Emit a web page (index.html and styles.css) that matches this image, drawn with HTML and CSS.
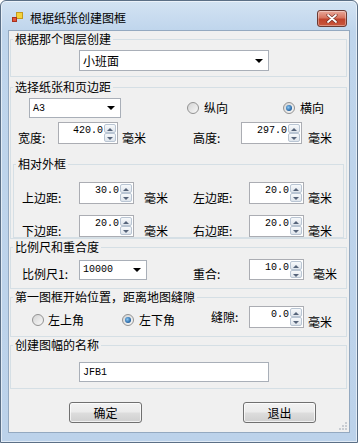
FILE: index.html
```html
<!DOCTYPE html>
<html lang="zh-CN">
<head>
    <meta charset="UTF-8">
    <title>根据纸张创建图框</title>
    <link rel="stylesheet" href="styles.css">
</head>
<body>
    <div class="window">
        <div class="titlebar">
            <svg class="app-icon" width="11" height="11" viewBox="0 0 11 11">
                <rect x="4.5" y="0.5" width="6" height="6" fill="#f3d23c" stroke="#c49a1e"/>
                <rect x="0.5" y="5.5" width="4" height="4" fill="#e2553c" stroke="#a8321e"/>
            </svg>
            <span class="title">根据纸张创建图框</span>
            <span class="close">
                <svg width="12" height="9" viewBox="0 0 12 9">
                    <path d="M2 1 L10 8 M10 1 L2 8" stroke="#6a2820" stroke-width="3" stroke-linecap="round"/>
                    <path d="M2 1 L10 8 M10 1 L2 8" stroke="#fff" stroke-width="1.8" stroke-linecap="round"/>
                </svg>
            </span>
        </div>

        <div class="client">
            <!-- source layer -->
            <fieldset class="g-layer">
                <legend>根据那个图层创建</legend>
                <div class="row">
                    <span class="combo combo-layer"><span class="txt">小班面</span><i class="caret"></i></span>
                </div>
            </fieldset>

            <!-- paper size and margins -->
            <fieldset class="g-paper">
                <legend>选择纸张和页边距</legend>
                <div class="row row-a">
                    <span class="combo combo-paper"><span class="txt latin">A3</span><i class="caret"></i></span>
                    <label class="radio radio-portrait"><span class="dot"></span>纵向</label>
                    <label class="radio radio-landscape"><span class="dot checked"></span>横向</label>
                </div>
                <div class="row row-b">
                    <span class="lbl lbl-width">宽度:</span>
                    <span class="spin spin-width"><span class="val">420.0</span><span class="arrows"><i class="up"></i><i class="dn"></i></span></span>
                    <span class="unit unit-width">毫米</span>
                    <span class="lbl lbl-height">高度:</span>
                    <span class="spin spin-height"><span class="val">297.0</span><span class="arrows"><i class="up"></i><i class="dn"></i></span></span>
                    <span class="unit unit-height">毫米</span>
                </div>

                <fieldset class="g-frame">
                    <legend>相对外框</legend>
                    <div class="row row-c">
                        <span class="lbl lbl-m1">上边距:</span>
                        <span class="spin spin-m"><span class="val">30.0</span><span class="arrows"><i class="up"></i><i class="dn"></i></span></span>
                        <span class="unit unit-m1">毫米</span>
                        <span class="lbl lbl-m2">左边距:</span>
                        <span class="spin spin-m"><span class="val">20.0</span><span class="arrows"><i class="up"></i><i class="dn"></i></span></span>
                        <span class="unit unit-m2">毫米</span>
                    </div>
                    <div class="row row-d">
                        <span class="lbl lbl-m1">下边距:</span>
                        <span class="spin spin-m"><span class="val">20.0</span><span class="arrows"><i class="up"></i><i class="dn"></i></span></span>
                        <span class="unit unit-m1">毫米</span>
                        <span class="lbl lbl-m2">右边距:</span>
                        <span class="spin spin-m"><span class="val">20.0</span><span class="arrows"><i class="up"></i><i class="dn"></i></span></span>
                        <span class="unit unit-m2">毫米</span>
                    </div>
                </fieldset>
            </fieldset>

            <!-- scale and overlap -->
            <fieldset class="g-scale">
                <legend>比例尺和重合度</legend>
                <div class="row row-scale">
                    <span class="lbl lbl-scale">比例尺1:</span>
                    <span class="combo combo-scale"><span class="txt latin">10000</span><i class="caret"></i></span>
                    <span class="lbl lbl-overlap">重合:</span>
                    <span class="spin spin-m"><span class="val">10.0</span><span class="arrows"><i class="up"></i><i class="dn"></i></span></span>
                    <span class="unit unit-overlap">毫米</span>
                </div>
            </fieldset>

            <!-- start position -->
            <fieldset class="g-start">
                <legend>第一图框开始位置，距离地图缝隙</legend>
                <div class="row row-start">
                    <label class="radio radio-tl"><span class="dot"></span>左上角</label>
                    <label class="radio radio-bl"><span class="dot checked"></span>左下角</label>
                    <span class="lbl lbl-gap">缝隙:</span>
                    <span class="spin spin-m"><span class="val">0.0</span><span class="arrows"><i class="up"></i><i class="dn"></i></span></span>
                    <span class="unit unit-gap">毫米</span>
                </div>
            </fieldset>

            <!-- sheet name -->
            <fieldset class="g-name">
                <legend>创建图幅的名称</legend>
                <div class="row">
                    <span class="textbox"><span class="latin">JFB1</span></span>
                </div>
            </fieldset>

            <div class="row buttons">
                <button class="btn btn-ok">确定</button>
                <button class="btn btn-exit">退出</button>
            </div>

            <svg class="grip" width="10" height="10" viewBox="0 0 10 10">
                <rect x="7" y="1" width="2" height="2" fill="#c8ccd2"/>
                <rect x="4" y="4" width="2" height="2" fill="#c8ccd2"/>
                <rect x="7" y="4" width="2" height="2" fill="#c8ccd2"/>
                <rect x="1" y="7" width="2" height="2" fill="#c8ccd2"/>
                <rect x="4" y="7" width="2" height="2" fill="#c8ccd2"/>
                <rect x="7" y="7" width="2" height="2" fill="#c8ccd2"/>
            </svg>
        </div>
    </div>
</body>
</html>
```
FILE: styles.css
```css
/* Basic page styling */
* {
    box-sizing: border-box;
}

body {
    margin: 0;
    font-family: "Noto Sans CJK SC", sans-serif;
    font-size: 12px;
    color: #000;
}

.window {
    width: 358px;
    height: 443px;
    border: 1px solid #5b6f86;
    border-radius: 6px 6px 0 0;
    background: linear-gradient(#d3e3f3, #bfd5ec 30px, #bcd2ea);
    box-shadow: inset 0 0 0 1px rgba(255, 255, 255, 0.55);
    display: flex;
    flex-direction: column;
}

/* title bar */
.titlebar {
    height: 29px;
    display: flex;
    align-items: flex-start;
    padding: 0 10px 0 11px;
}

.app-icon {
    margin-top: 11px;
}

.title {
    margin-left: 7px;
    margin-top: 9px;
    line-height: 16px;
}

.close {
    margin-left: auto;
    margin-top: 9px;
    width: 30px;
    height: 17px;
    border: 1px solid #6b3a33;
    border-radius: 3px;
    background: linear-gradient(#e9a99b 0%, #d7745f 45%, #c0432c 55%, #c9573e 100%);
    box-shadow: inset 0 0 0 1px rgba(255, 255, 255, 0.35);
    display: flex;
    align-items: center;
    justify-content: center;
}

/* client area */
.client {
    flex: 1;
    margin: 0 7px 9px;
    background: #f0f0f0;
    border: 1px solid #94a9c0;
    position: relative;
}

fieldset {
    margin: 0 2px 0 1px;
    padding: 0;
    border: 1px solid #d5dfe5;
    min-width: 0;
}

legend {
    margin-left: 2px;
    padding: 0 2px;
    line-height: 16px;
}

.row {
    display: flex;
    align-items: center;
}

.latin {
    font-family: "Liberation Mono", monospace;
    font-size: 10px;
}

/* combo boxes and text box */
.combo,
.textbox {
    display: flex;
    align-items: center;
    background: #fff;
    border: 1px solid #a9afb8;
    padding-left: 3px;
}

.combo .txt {
    flex: 1;
}

.caret {
    width: 0;
    height: 0;
    border-left: 4px solid transparent;
    border-right: 4px solid transparent;
    border-top: 4px solid #000;
    margin-right: 5px;
}

.textbox {
    margin-left: 68px;
    width: 190px;
    height: 20px;
}

/* spin boxes */
.spin {
    display: flex;
    height: 22px;
    background: #fff;
    border: 1px solid #abadb3;
}

.spin .val {
    flex: 1;
    text-align: right;
    font-family: "Liberation Mono", monospace;
    font-size: 10px;
    line-height: 12px;
    padding: 2px 1px 0 0;
}

.arrows {
    width: 13px;
    display: flex;
    flex-direction: column;
    padding: 1px 1px 1px 0;
}

.arrows i {
    flex: 1;
    position: relative;
    border: 1px solid #b9c5d3;
    border-radius: 2px;
    background: linear-gradient(#f7f9fb, #dfe5ec);
}

.arrows i::after {
    content: "";
    position: absolute;
    left: 2px;
    top: 3px;
    border-left: 3px solid transparent;
    border-right: 3px solid transparent;
}

.arrows .up::after {
    border-bottom: 3px solid #56647a;
}

.arrows .dn::after {
    border-top: 3px solid #56647a;
}

/* labels */
.lbl,
.unit {
    align-self: flex-end;
    margin-bottom: -2px;
    line-height: 16px;
    white-space: nowrap;
}

/* radio buttons */
.radio {
    display: flex;
    align-items: center;
    gap: 5px;
    line-height: 16px;
}

.dot {
    width: 12px;
    height: 12px;
    border-radius: 50%;
    border: 1px solid #929292;
    background: linear-gradient(135deg, #d4d4d4, #f8f8f8);
    display: flex;
    align-items: center;
    justify-content: center;
}

.dot.checked::after {
    content: "";
    width: 6px;
    height: 6px;
    border-radius: 50%;
    background: radial-gradient(circle at 40% 40%, #8cc8f4, #1f5f9e 70%, #163f6d);
}

/* source layer group */
.g-layer {
    padding: 3px 0 5px;
}

.combo-layer {
    margin-left: 68px;
    width: 190px;
    height: 21px;
}

/* paper group */
.g-paper {
    margin-top: 2px;
    padding: 3px 0 0;
}

.row-a {
    height: 20px;
}

.combo-paper {
    margin-left: 18px;
    width: 92px;
    height: 20px;
}

.radio-portrait {
    margin-left: 66px;
}

.radio-landscape {
    margin-left: 55px;
}

.row-b {
    margin-top: 4px;
    height: 22px;
}

.lbl-width {
    margin-left: 7px;
    width: 40px;
}

.spin-width {
    width: 60px;
}

.unit-width {
    margin-left: 4px;
    width: 24px;
}

.lbl-height {
    margin-left: 47px;
    width: 48px;
}

.spin-height {
    width: 61px;
}

.unit-height {
    margin-left: 6px;
}

/* nested frame group */
.g-frame {
    margin: 12px 2px 0 2px;
    padding: 10px 0 0;
}

.row-c,
.row-d {
    height: 22px;
}

.row-d {
    margin-top: 11px;
}

.lbl-m1 {
    margin-left: 8px;
    width: 57px;
}

.spin-m {
    width: 55px;
}

.unit-m1 {
    margin-left: 10px;
    width: 24px;
}

.lbl-m2 {
    margin-left: 25px;
    width: 56px;
}

.unit-m2 {
    margin-left: 4px;
}

/* scale group */
.g-scale {
    padding: 4px 0 8px;
}

.row-scale {
    height: 21px;
}

.row-scale .spin {
    height: 21px;
}

.lbl-scale {
    margin-left: 11px;
    width: 57px;
}

.combo-scale {
    width: 68px;
    height: 20px;
}

.lbl-overlap {
    margin-left: 46px;
    width: 56px;
}

.unit-overlap {
    margin-left: 9px;
}

/* start position group */
.g-start {
    padding: 1px 0 8px;
}

.row-start {
    height: 22px;
}

.row-start .radio {
    align-self: flex-end;
}

.radio-tl {
    margin-left: 21px;
    gap: 4px;
}

.radio-bl {
    margin-left: 38px;
}

.lbl-gap {
    align-self: center;
    margin-bottom: 0;
    margin-left: 36px;
    width: 38px;
}

.unit-gap {
    margin-left: 4px;
}

/* name group */
.g-name {
    padding: 9px 0 6px;
}

/* buttons */
.buttons {
    margin-top: 13px;
}

.btn {
    width: 73px;
    height: 21px;
    padding: 0;
    border: 1px solid #707070;
    border-radius: 3px;
    background: linear-gradient(#f2f2f2 0%, #ebebeb 48%, #dddddd 52%, #cfcfcf 100%);
    box-shadow: inset 0 0 0 1px rgba(255, 255, 255, 0.7);
    font-family: "Noto Sans CJK SC", sans-serif;
    font-size: 12px;
    line-height: 17px;
    color: #000;
}

.btn-ok {
    margin-left: 60px;
}

.btn-exit {
    margin-left: 101px;
}

.grip {
    position: absolute;
    right: 1px;
    bottom: 1px;
}
```
